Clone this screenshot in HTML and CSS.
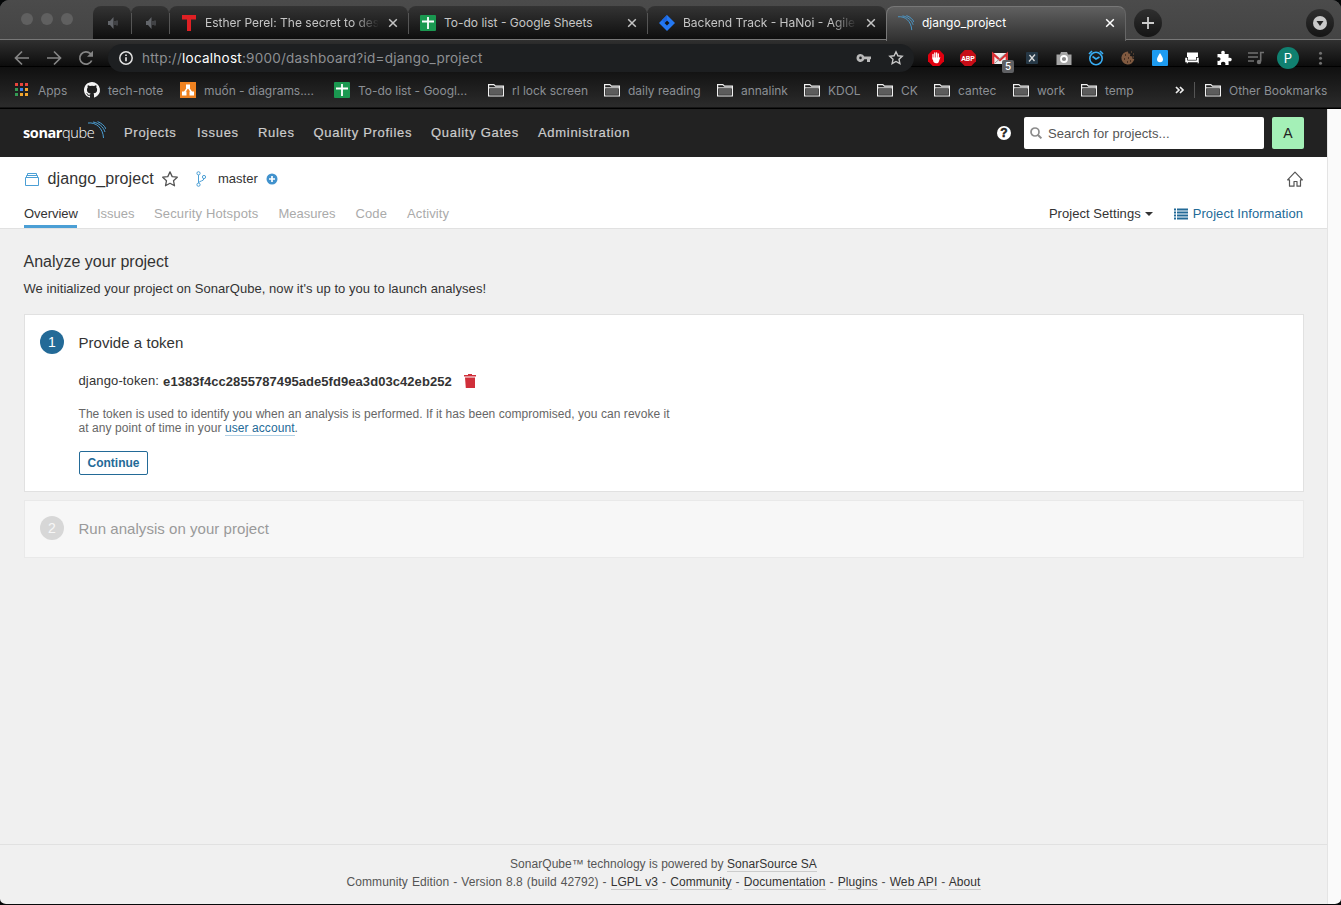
FILE: index.html
```
<!DOCTYPE html>
<html lang="en">
<head>
<meta charset="utf-8">
<title>django_project</title>
<link rel="stylesheet" href="styles.css">
</head>
<body>
<svg class="defs" aria-hidden="true">
  <symbol id="folder" viewBox="0 0 16 16"><path d="M.6 14V2.600h5.200l1.700 1.600h7.900V14z" fill="#1b1b1b" stroke="#f2f2f2" stroke-width="1.200"/><path d="M2 6.800h12v6H2z" fill="#5c5c5c"/><path d="M1 5.800h14" stroke="#f2f2f2"/></symbol>
  <symbol id="close" viewBox="0 0 10 10"><path d="M1.200 1.200l7.600 7.600M8.800 1.200L1.200 8.800" stroke="currentColor" stroke-width="1.500"/></symbol>
  <symbol id="sheets" viewBox="0 0 16 16"><rect width="16" height="16" rx="1" fill="#1a9850"/><path d="M2 6.500h12M8 2v12" stroke="#fff" stroke-width="1.800"/></symbol>
  <symbol id="speaker" viewBox="0 0 10 12"><path d="M0 4h2l3.500-4v12L2 8H0z" fill="#62656a"/><path d="M7 4v4M9 3.500v5" stroke="#62656a"/></symbol>
  <symbol id="waves" viewBox="0 0 18 18"><path d="M0 2C8 1 15 7 15.500 17M5 1c6 1 10.500 5 12 10M9.500 .6c4 1.500 7 4 8.500 7.400" fill="none" stroke="#4b9fd5" stroke-width="1"/></symbol>
</svg>
<div class="window">
  <header class="chrome">
    <div class="tabstrip">
      <div class="lights"><i></i><i></i><i></i></div>
      <div class="tab tab-mini"><svg><use href="#speaker"/></svg></div>
      <div class="tab tab-mini"><svg><use href="#speaker"/></svg></div>
      <div class="tab"><svg class="fav" viewBox="0 0 16 16"><path d="M1 0h14v4.500h-5V16H6V4.500H1z" fill="#e02024"/></svg><span class="tab-title fade">Esther Perel: The secret to des</span><svg class="x"><use href="#close"/></svg></div>
      <div class="tab"><svg class="fav"><use href="#sheets"/></svg><span class="tab-title">To-do list - Google Sheets</span><svg class="x"><use href="#close"/></svg></div>
      <div class="tab"><svg class="fav" viewBox="0 0 16 16"><path d="M8 0l8 8-8 8-8-8z" fill="#2478f2"/><path d="M8 5.500L10.500 8 8 10.500 5.500 8z" fill="#151515"/><path d="M8 0v5.500L5.500 8 3 5z" fill="#1b66e0"/></svg><span class="tab-title fade">Backend Track - HaNoi - Agile</span><svg class="x"><use href="#close"/></svg></div>
      <div class="tab active"><svg class="fav"><use href="#waves"/></svg><span class="tab-title">django_project</span><svg class="x"><use href="#close"/></svg></div>
      <div class="strip-end">
        <span class="round"><svg viewBox="0 0 14 14" width="14" height="14"><path d="M7 1v12M1 7h12" stroke="#ccc" stroke-width="1.800"/></svg></span>
        <span class="round"><svg viewBox="0 0 14 14" width="14" height="14"><circle cx="7" cy="7" r="7" fill="#c8c8c8"/><path d="M3.500 5h7L7 10z" fill="#222"/></svg></span>
      </div>
    </div>
    <div class="toolbar">
      <div class="navbtns">
        <svg viewBox="0 0 16 16"><path d="M15 8H2M8 1.500L1.500 8 8 14.500" fill="none" stroke="#858585" stroke-width="1.700"/></svg>
        <svg viewBox="0 0 16 16"><path d="M1 8h13M8 1.500L14.500 8 8 14.500" fill="none" stroke="#858585" stroke-width="1.700"/></svg>
        <svg viewBox="0 0 16 16"><path d="M13.700 10.500A6.200 6.200 0 1 1 12.500 3.700L14 5.200" fill="none" stroke="#858585" stroke-width="1.700"/><path d="M15 .8v6H9z" fill="#858585"/></svg>
      </div>
      <div class="omnibox">
        <svg class="info" viewBox="0 0 14 14"><circle cx="7" cy="7" r="6.200" fill="none" stroke="#e2e2e2" stroke-width="1.500"/><path d="M7 6.300v4M7 3.500v1.500" stroke="#e2e2e2" stroke-width="1.700"/></svg>
        <span class="url">http://<b>localhost</b>:9000/dashboard?id=django_project</span>
        <svg class="key" viewBox="0 0 16 16"><path d="M4.500 4a4 4 0 1 0 3.800 5.300H11V12h3V9.300h1V6.500H8.300A4 4 0 0 0 4.500 4zm0 2.600a1.300 1.300 0 1 1 0 2.600 1.300 1.300 0 0 1 0-2.600z" fill="#b9b9b9" fill-rule="evenodd"/></svg>
        <svg class="star" viewBox="0 0 16 16"><path d="M8 1.800l1.900 4 4.300.5L11 9.300l.9 4.400L8 11.500l-3.900 2.200.9-4.400-3.200-3 4.300-.5z" fill="none" stroke="#c8c8c8" stroke-width="1.400"/></svg>
      </div>
      <div class="extensions">
        <svg viewBox="0 0 16 16"><path d="M4.700 0h6.600L16 4.700v6.600L11.300 16H4.700L0 11.300V4.700z" fill="#e0000f"/><path d="M5 9V4.500M6.800 8V3M8.600 8V2.800M10.300 8.500V4" stroke="#fff" stroke-width="1.300" stroke-linecap="round"/><path d="M4.400 7.500h6.500l1.500-.3-1.900 5.200Q8 14.500 5.500 12z" fill="#fff"/></svg>
        <svg viewBox="0 0 16 16"><path d="M4.700 0h6.600L16 4.700v6.600L11.300 16H4.700L0 11.300V4.700z" fill="#c70d17"/><text x="8" y="10.700" text-anchor="middle" class="abp">ABP</text></svg>
        <span class="mail"><svg viewBox="0 0 16 16"><path d="M0 3h16v11H0z" fill="#eee"/><path d="M1.200 14V4L8 10l6.800-6v10" fill="none" stroke="#d93034" stroke-width="2.300"/><path d="M3 13l10-9" stroke="#999"/></svg><em>5</em></span>
        <svg viewBox="0 0 16 16"><rect x="2" y="2" width="12" height="12" rx="1" fill="#263846"/><path d="M5.500 5l5 6M11 4.500L5 11.500" stroke="#ddd" stroke-width="1.300"/></svg>
        <svg viewBox="0 0 16 16"><path d="M.5 4.500h3.500l1-2.500h6l1 2.500h3.500V15H.5z" fill="#a5a5a5"/><circle cx="8" cy="9" r="3" fill="#888" stroke="#fff" stroke-width="1.800"/></svg>
        <svg viewBox="0 0 16 16"><circle cx="8" cy="8.500" r="6.200" fill="none" stroke="#38aef5" stroke-width="1.600"/><path d="M1 4l3-3M12 1l3 3M4.500 6.500L8 9l3.500-2" fill="none" stroke="#38aef5" stroke-width="1.600"/></svg>
        <svg viewBox="0 0 16 16"><path d="M8 1.500a6.500 6.500 0 1 0 6.300 7.500l-2-.6.200-2-2.500-.3.400-2.300-2-.3z" fill="#805a40"/><path d="M5 5h1M8 8h1M4 9h1M7 12h1M10 11h1" stroke="#38241a" stroke-width="1.500"/><path d="M11 2h1M13 4h1M13 7h1" stroke="#805a40"/></svg>
        <svg viewBox="0 0 16 16"><rect width="16" height="16" rx="1" fill="#1d9bf0"/><path d="M8 3s3 4.300 3 6.300a3 3 0 0 1-6 0C5 7.300 8 3 8 3z" fill="#fff"/></svg>
        <svg viewBox="0 0 16 16"><path d="M3 2.500h11V7h-2v3H4V7H3z" fill="#fff"/><path d="M1 7.500h2.500v2.700h9V7.500H15v6h-1.500v-1H4v1H2.500v-1H1z" fill="#fff" stroke="#111" stroke-width=".5"/></svg>
        <svg viewBox="0 0 16 16"><path d="M1.500 4h4C4.700 1.800 5.600.7 7 .7s2.300 1.100 1.600 3.300h4v4c2-.7 3.100.2 3.100 1.500s-1.100 2.300-3.100 1.500v4H9.300c.6-2-.5-3.200-2.200-3.200S4.600 13 5.200 15H1.500v-4.200c2 .5 3-.4 3-1.700s-1-2.200-3-1.600z" fill="#fff"/></svg>
        <svg viewBox="0 0 16 16"><path d="M0 3h10M0 7h10M0 11h6" stroke="#707070" stroke-width="1.600"/><path d="M12.700 11.500V2.500H16" fill="none" stroke="#707070" stroke-width="1.600"/><circle cx="11" cy="12" r="2.200" fill="#707070"/></svg>
        <span class="profile">P</span>
        <svg viewBox="0 0 16 16"><g fill="#707070"><circle cx="8.500" cy="3.200" r="1.500"/><circle cx="8.500" cy="8.200" r="1.500"/><circle cx="8.500" cy="13.200" r="1.500"/></g></svg>
      </div>
    </div>
    <nav class="bookmarks">
      <a><svg viewBox="0 0 16 16"><path d="M1 1h3v3H1zM6 1h3v3H6zM11 1h3v3h-3z" fill="#e8453c"/><path d="M1 6h3v3H1zM1 11h3v3H1z" fill="#349b54"/><path d="M6 6h3v3H6z" fill="#3a82f0"/><path d="M11 6h3v3h-3zM6 11h3v3H6zM11 11h3v3h-3z" fill="#f3a72e"/></svg>Apps</a>
      <a><svg viewBox="0 0 16 16"><path d="M8 0C3.580 0 0 3.580 0 8c0 3.540 2.290 6.530 5.470 7.590.4.070.55-.17.55-.38V13.700c-2.230.48-2.700-.95-2.700-.95-.36-.92-.89-1.170-.89-1.170-.73-.5.050-.49.050-.49.810.060 1.230.83 1.230.83.720 1.230 1.890.87 2.350.67.070-.52.280-.87.510-1.070-1.780-.2-3.640-.89-3.640-3.950 0-.87.310-1.590.82-2.150-.080-.2-.36-1.020.080-2.120 0 0 .67-.21 2.200.82a7.600 7.600 0 0 1 4 0c1.530-1.040 2.200-.82 2.200-.82.44 1.100.16 1.920.080 2.120.51.560.82 1.270.82 2.150 0 3.070-1.870 3.750-3.650 3.950.29.250.54.730.54 1.480v2.200c0 .21.150.46.550.38A8 8 0 0 0 8 0z" fill="#f4f4f4"/></svg>tech-note</a>
      <a><svg viewBox="0 0 16 16"><rect width="16" height="16" fill="#ef8220"/><path d="M8 5l-4 6M8 5l4 6" stroke="#fff" stroke-width="1.400"/><path d="M6 2.500h4v4H6zM2 9.500h4.500v4H2zM9.500 9.500H14v4H9.500z" fill="#fff"/></svg>muốn - diagrams....</a>
      <a><svg><use href="#sheets"/></svg>To-do list - Googl...</a>
      <a><svg><use href="#folder"/></svg>rl lock screen</a>
      <a><svg><use href="#folder"/></svg>daily reading</a>
      <a><svg><use href="#folder"/></svg>annalink</a>
      <a><svg><use href="#folder"/></svg>KDOL</a>
      <a><svg><use href="#folder"/></svg>CK</a>
      <a><svg><use href="#folder"/></svg>cantec</a>
      <a><svg><use href="#folder"/></svg>work</a>
      <a><svg><use href="#folder"/></svg>temp</a>
      <svg class="more" viewBox="0 0 9 8"><path d="M1 1l3 3-3 3M5 1l3 3-3 3" fill="none" stroke="#eee" stroke-width="1.700"/></svg>
      <a class="other"><svg><use href="#folder"/></svg>Other Bookmarks</a>
    </nav>
  </header>
  <div class="viewport">
    <div class="page">
      <nav class="topnav">
        <div class="logo"><b>sonar</b><span>qube</span><svg><use href="#waves"/></svg></div>
        <div class="menu"><a>Projects</a><a>Issues</a><a>Rules</a><a>Quality Profiles</a><a>Quality Gates</a><a>Administration</a></div>
        <span class="help">?</span>
        <div class="search"><svg viewBox="0 0 12 12"><circle cx="5" cy="5" r="4" fill="none" stroke="#8b8b8b" stroke-width="1.700"/><path d="M8 8l3.400 3.400" stroke="#8b8b8b" stroke-width="2"/></svg>Search for projects...</div>
        <span class="avatar">A</span>
      </nav>
      <section class="project">
        <div class="title-row">
          <svg class="box" viewBox="0 0 14 13"><path d="M.5 4.500h13v8H.5zM1.500 4.500v-2h11v2M2.500 2.500v-2h9v2" fill="none" stroke="#4b9fd5"/></svg>
          <span class="name">django_project</span>
          <svg class="fave" viewBox="0 0 16 16"><path d="M8 .9l2.200 4.700 5.100.6-3.800 3.500 1 5.100L8 12.300l-4.500 2.500 1-5.100L.7 6.200l5.100-.6z" fill="none" stroke="#555" stroke-width="1.300" stroke-linejoin="round"/></svg>
          <svg class="branch" viewBox="0 0 11 16"><path d="M2.500 4v8M2.500 12C3 9.500 8 10.500 8 7.500" fill="none" stroke="#4b9fd5"/><g fill="#fff" stroke="#4b9fd5"><circle cx="2.500" cy="2.300" r="1.600"/><circle cx="2.500" cy="13.700" r="1.600"/><circle cx="8" cy="6" r="1.600"/></g></svg>
          <span class="master">master</span>
          <svg class="plus" viewBox="0 0 12 12"><circle cx="6" cy="6" r="5.500" fill="#4192cd"/><path d="M6 3v6M3 6h6" stroke="#fff" stroke-width="1.700"/></svg>
          <svg class="home" viewBox="0 0 16 16"><path d="M.6 8.800L8 1.200l7.400 7.600H13.500V15.200H10V10.500H7V15.200H2.500V8.800z" fill="none" stroke="#555" stroke-width="1.200" stroke-linejoin="round"/></svg>
        </div>
        <div class="tabs">
          <a class="current">Overview</a><a>Issues</a><a>Security Hotspots</a><a>Measures</a><a>Code</a><a>Activity</a>
          <span class="settings">Project Settings<i></i></span>
          <span class="information"><svg viewBox="0 0 14 12"><path d="M0 1.500h2M0 4.500h2M0 7.500h2M0 10.500h2M3 1.500h11M3 4.500h11M3 7.500h11M3 10.500h11" stroke="#236a97" stroke-width="1.800"/></svg>Project Information</span>
        </div>
      </section>
      <main>
        <h1>Analyze your project</h1>
        <p class="lead">We initialized your project on SonarQube, now it's up to you to launch analyses!</p>
        <section class="card first">
          <span class="num">1</span>
          <div>
            <h2>Provide a token</h2>
            <div class="token"><span>django-token:</span><b>e1383f4cc2855787495ade5fd9ea3d03c42eb252</b><svg viewBox="0 0 12 14"><path d="M0 1h4V0h4v1h4v1.500H0zM1 3.500h10V14H1.800z" fill="#d02f3a"/></svg></div>
            <p class="note"><span>The token is used to identify you when an analysis is performed. If it has been compromised, you can revoke it</span><br><span class="last">at any point of time in your <a>user account</a>.</span></p>
            <button>Continue</button>
          </div>
        </section>
        <section class="card second"><span class="num">2</span><h2>Run analysis on your project</h2></section>
      </main>
      <footer>
        <div class="powered">SonarQube™ technology is powered by <a>SonarSource SA</a></div>
        <div class="edition">Community Edition - Version 8.8 (build 42792) - <a>LGPL v3</a> - <a>Community</a> - <a>Documentation</a> - <a>Plugins</a> - <a>Web API</a> - <a>About</a></div>
      </footer>
    </div>
    <div class="scrollbar"></div>
  </div>
</div>
</body>
</html>
```
FILE: styles.css
```
* { box-sizing: border-box; }
body { margin: 0; background: #050708; font-family: "Liberation Sans", Arial, sans-serif; font-size: 13px; color: #333; }
.defs { display: none; }
svg { display: block; flex: none; overflow: visible; }
h1, h2, p { margin: 0; font-weight: 400; }
.window { width: 1341px; height: 905px; display: flex; flex-direction: column; border-radius: 9px 9px 6px 6px; overflow: hidden; border-bottom: 1px solid #08090a; }

/* browser chrome */
.chrome { flex: none; height: 109px; font-family: Inter, Roboto, sans-serif; background: linear-gradient(#4a4a4a 0 39px, #303030 40px, #0c0c0c 66px, #000 66px 67px, #101010 67px, #2b2b2b 107px, #000 108px); white-space: nowrap; }
.tabstrip { height: 40px; padding-top: 6px; display: flex; border-bottom: 1px solid #777; background: linear-gradient(#4b4b4b, #444); }
.lights { width: 93px; display: flex; gap: 8px; padding: 7px 0 0 21px; }
.lights i { width: 12px; height: 12px; border-radius: 50%; background: #606060; }
.tab { width: 239px; height: 33px; padding: 0 10px 0 12px; display: flex; align-items: center; border-radius: 8px 8px 0 0; background: linear-gradient(#343434, #0e0e0e); color: #c5c5c5; font-size: 12px; position: relative; }
.tab + .tab::before { content: ""; position: absolute; left: 0; top: 7px; width: 1px; height: 21px; background: #555; }
.tab-mini { width: 38px; padding: 0 0 0 15px; }
.tab-mini svg { width: 10px; height: 12px; }
.fav { width: 16px; height: 16px; margin-right: 8px; }
.tab-title { flex: 1; margin-right: 9px; }
.fade { -webkit-mask-image: linear-gradient(90deg, #000 85%, transparent); mask-image: linear-gradient(90deg, #000 85%, transparent); }
.x { width: 10px; height: 10px; }
.tab.active { width: 240px; height: 35px; padding: 0 10px 3px 11px; border: 1px solid #777; border-bottom: 0; border-right-color: #666; background: linear-gradient(#606060, #303030); color: #fff; }
.tab.active::before { display: none; }
.strip-end { flex: 1; display: flex; justify-content: space-between; padding: 3px 7px 0 8px; }
.round { width: 28px; height: 28px; border-radius: 50%; background: linear-gradient(#2f2f2f, #151515); display: flex; align-items: center; justify-content: center; }
.toolbar { height: 36px; display: flex; align-items: center; }
.navbtns { width: 108px; padding-left: 14px; display: flex; gap: 16px; }
.navbtns svg { width: 16px; height: 16px; }
.omnibox { width: 806px; height: 28px; border-radius: 14px; background: #1d1f21; display: flex; align-items: center; padding: 0 10px 0 11px; }
.info { width: 14px; height: 14px; }
.url { flex: 1; margin-left: 9px; font-size: 13.5px; color: #8e9093; letter-spacing: .24px; }
.url b { font-weight: 400; color: #fff; }
.key, .star { width: 16px; height: 16px; }
.star { margin-left: 16px; }
.extensions { display: flex; align-items: center; gap: 16px; padding-left: 14px; }
.extensions svg { width: 16px; height: 16px; }
.abp { font: 700 7px Roboto, sans-serif; fill: #fff; }
.mail { position: relative; }
.mail em { position: absolute; left: 10px; top: 10px; width: 12px; height: 13px; border-radius: 2px; background: #5f6063; color: #fff; font: 500 10px/13px Inter, sans-serif; text-align: center; }
.profile { width: 22px; height: 22px; margin: 0 -3px; border-radius: 50%; background: #108070; color: #fff; text-align: center; line-height: 22px; font-size: 13px; }
.bookmarks { height: 28px; display: flex; align-items: center; padding-left: 14px; color: #8b8f94; font-size: 12px; letter-spacing: -.03px; }
.bookmarks a { display: flex; align-items: center; gap: 8px; }
.bookmarks a svg { width: 16px; height: 16px; }
.bookmarks a:nth-child(1) { width: 70px; }
.bookmarks a:nth-child(2) { width: 96px; }
.bookmarks a:nth-child(3), .bookmarks a:nth-child(4) { width: 154px; }
.bookmarks a:nth-child(5) { width: 116px; }
.bookmarks a:nth-child(6) { width: 113px; }
.bookmarks a:nth-child(7) { width: 87px; }
.bookmarks a:nth-child(8) { width: 73px; }
.bookmarks a:nth-child(9) { width: 57px; }
.bookmarks a:nth-child(10) { width: 79px; }
.bookmarks a:nth-child(11) { width: 68px; }
.bookmarks a:nth-child(12) { width: 94px; }
.more { width: 9px; height: 8px; }
.bookmarks .other { margin-left: 10px; padding-left: 10px; height: 16px; border-left: 1px solid #555; }

/* page */
.viewport { flex: 1; display: flex; min-height: 0; }
.page { width: 1327px; display: flex; flex-direction: column; background: #f0f0f0; }
.scrollbar { width: 14px; background: #fafafa; border-left: 1px solid #e4e4e4; }
.topnav { height: 48px; background: #222; display: flex; align-items: center; padding-left: 23px; }
.logo { width: 101px; display: flex; align-items: center; color: #fff; font: 14.5px/18px "Open Sans", sans-serif; letter-spacing: -.4px; }
.logo b { font-weight: 700; }
.logo span { font-weight: 300; }
.logo svg { width: 18px; height: 18px; margin: -7px 0 0 -6px; }
.menu { flex: 1; display: flex; padding-bottom: 2px; color: #ccc; letter-spacing: .7px; white-space: nowrap; -webkit-text-stroke: .2px #ccc; }
.menu a:nth-child(1) { width: 73px; }
.menu a:nth-child(2) { width: 61px; }
.menu a:nth-child(3) { width: 55.5px; }
.menu a:nth-child(4) { width: 117.5px; }
.menu a:nth-child(5) { width: 107px; }
.help { width: 14px; height: 14px; border-radius: 50%; background: #fff; color: #222; font: bold 12px/14px "Liberation Sans", sans-serif; text-align: center; margin-right: 13px; -webkit-text-stroke: .5px #222; }
.search { width: 240px; height: 32px; border-radius: 2px; background: #fff; display: flex; align-items: center; gap: 6px; padding-left: 6px; color: #555; letter-spacing: .08px; }
.search svg { width: 12px; height: 12px; }
.avatar { width: 32px; height: 32px; margin: 0 23px 0 8px; border-radius: 2px; background: #a4f0b7; color: #222; line-height: 32px; text-align: center; font-size: 14px; }
.project { height: 72px; background: #fff; border-bottom: 1px solid #e1e1e1; padding: 0 24px 0 24px; display: flex; flex-direction: column; justify-content: space-between; }
.title-row { height: 44px; display: flex; align-items: center; }
.box { width: 14px; height: 13px; margin-left: 1px; }
.name { margin-left: 8.5px; width: 114.5px; font-size: 16px; line-height: 20px; letter-spacing: .1px; }
.fave { width: 16px; height: 16px; }
.branch { width: 11px; height: 16px; margin-left: 18px; }
.master { margin-left: 11px; width: 48px; padding-bottom: 1px; }
.plus { width: 12px; height: 12px; }
.home { width: 16px; height: 16px; margin-left: auto; }
.tabs { display: flex; height: 27px; color: #aaa; line-height: 26px; white-space: nowrap; }
.tabs a { margin-right: 20px; }
.tabs a:nth-child(1) { width: 53px; letter-spacing: -.05px; }
.tabs a:nth-child(2) { width: 37.5px; margin-right: 19.5px; }
.tabs a:nth-child(3) { letter-spacing: .15px; }
.tabs a:nth-child(5), .tabs a:nth-child(6) { letter-spacing: .12px; }
.tabs .current { color: #333; border-bottom: 3px solid #4b9fd5; }
.settings { margin-left: auto; display: flex; align-items: center; height: 26px; color: #333; letter-spacing: .05px; }
.settings i { margin-left: 4px; border: 4px solid transparent; border-top-color: #333; border-bottom: 0; }
.information { margin-left: 21px; display: flex; align-items: center; gap: 5px; height: 26px; color: #236a97; letter-spacing: .06px; }
.information svg { width: 14px; height: 12px; }
main { flex: 1; padding: 23px 23px 0 24px; }
h1 { font-size: 16px; line-height: 20px; margin-left: -.5px; }
.lead { margin: 9px 0 0 -.5px; line-height: 16px; letter-spacing: .055px; }
.card { border: 1px solid #e1e1e1; display: flex; padding-left: 15px; }
.card .num { width: 24px; height: 24px; border-radius: 50%; background: #236a97; color: #fff; text-align: center; font-size: 14px; line-height: 24px; margin-right: 14.5px; }
.card h2 { font-size: 15px; line-height: 26px; height: 24px; letter-spacing: .04px; }
.first { margin-top: 17px; height: 178px; background: #fff; padding-top: 15px; }
.token { display: flex; height: 16px; line-height: 16px; margin-top: 19px; white-space: nowrap; }
.token span { letter-spacing: .14px; }
.token b { margin-left: 4px; padding-top: 1px; letter-spacing: .06px; }
.token svg { width: 12px; height: 14px; margin: 1px 0 0 12px; }
.note { margin-top: 18px; font-size: 12px; line-height: 14px; color: #666; white-space: nowrap; letter-spacing: .05px; }
.note .last { letter-spacing: .08px; }
.note a { color: #236a97; border-bottom: 1px solid #b0d0e5; }
button { display: block; margin: 16px 0 0 .5px; width: 69px; height: 24px; padding: 0; border: 1px solid #236a97; border-radius: 2px; background: #fff; color: #236a97; font: bold 12px "Liberation Sans", sans-serif; }
.second { height: 58px; margin-top: 8px; padding-top: 15px; background: #f7f7f7; border-color: #e9e9e9; }
.second .num { background: #d7d7d7; color: #f7f7f7; }
.second h2 { color: #9a9a9a; }
footer { height: 60px; border-top: 1px solid #e1e1e1; padding-top: 10px; text-align: center; font-size: 12px; line-height: 18px; color: #555; white-space: nowrap; }
footer a { color: #333; border-bottom: 1px solid #ccc; }
.powered { letter-spacing: .04px; }
.edition { letter-spacing: .09px; word-spacing: .55px; }
```
